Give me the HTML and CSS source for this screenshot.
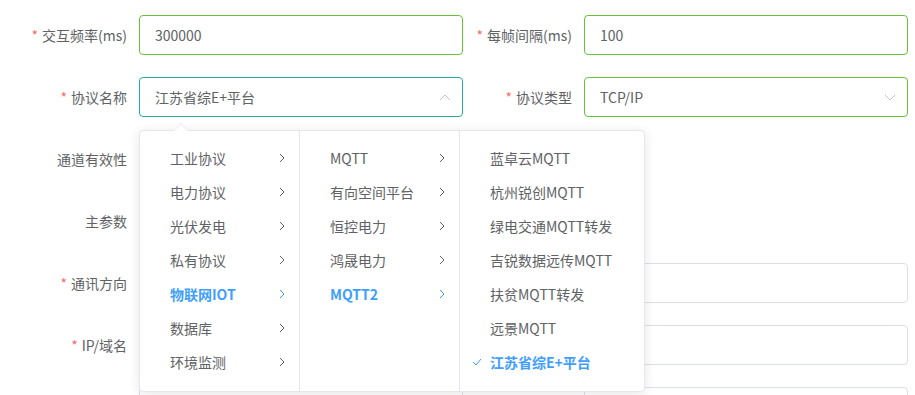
FILE: index.html
```html
<!DOCTYPE html>
<html lang="zh-CN">
<head>
  <meta charset="UTF-8">
  <meta name="viewport" content="width=device-width, initial-scale=1.0">
  <title>通道配置</title>
  <link rel="stylesheet" href="styles.css">
</head>
<body>
  <form class="form">
    <!-- row 1 -->
    <div class="form-item">
      <label class="label"><span class="req">*</span>交互频率(ms)</label>
      <div class="control"><div class="input is-success">300000</div></div>
    </div>
    <div class="form-item right">
      <label class="label"><span class="req">*</span>每帧间隔(ms)</label>
      <div class="control"><div class="input is-success">100</div></div>
    </div>

    <!-- row 2 -->
    <div class="form-item">
      <label class="label"><span class="req">*</span>协议名称</label>
      <div class="control select-wrap">
        <div class="input select is-focus">
          <span>江苏省综E+平台</span>
          <svg class="caret" width="12" height="7" viewBox="0 0 12 7"><path d="M1 6l5-5 5 5"/></svg>
        </div>

        <!-- cascader popup -->
        <div class="cascader">
          <span class="popper-arrow"></span>
          <ul class="menu">
            <li class="item">工业协议<svg class="chev" width="6" height="10" viewBox="0 0 6 10"><path d="M1 1l4 4-4 4"/></svg></li>
            <li class="item">电力协议<svg class="chev" width="6" height="10" viewBox="0 0 6 10"><path d="M1 1l4 4-4 4"/></svg></li>
            <li class="item">光伏发电<svg class="chev" width="6" height="10" viewBox="0 0 6 10"><path d="M1 1l4 4-4 4"/></svg></li>
            <li class="item">私有协议<svg class="chev" width="6" height="10" viewBox="0 0 6 10"><path d="M1 1l4 4-4 4"/></svg></li>
            <li class="item active">物联网IOT<svg class="chev" width="6" height="10" viewBox="0 0 6 10"><path d="M1 1l4 4-4 4"/></svg></li>
            <li class="item">数据库<svg class="chev" width="6" height="10" viewBox="0 0 6 10"><path d="M1 1l4 4-4 4"/></svg></li>
            <li class="item">环境监测<svg class="chev" width="6" height="10" viewBox="0 0 6 10"><path d="M1 1l4 4-4 4"/></svg></li>
          </ul>
          <ul class="menu">
            <li class="item">MQTT<svg class="chev" width="6" height="10" viewBox="0 0 6 10"><path d="M1 1l4 4-4 4"/></svg></li>
            <li class="item">有向空间平台<svg class="chev" width="6" height="10" viewBox="0 0 6 10"><path d="M1 1l4 4-4 4"/></svg></li>
            <li class="item">恒控电力<svg class="chev" width="6" height="10" viewBox="0 0 6 10"><path d="M1 1l4 4-4 4"/></svg></li>
            <li class="item">鸿晟电力<svg class="chev" width="6" height="10" viewBox="0 0 6 10"><path d="M1 1l4 4-4 4"/></svg></li>
            <li class="item active">MQTT2<svg class="chev" width="6" height="10" viewBox="0 0 6 10"><path d="M1 1l4 4-4 4"/></svg></li>
          </ul>
          <ul class="menu last">
            <li class="item">蓝卓云MQTT</li>
            <li class="item">杭州锐创MQTT</li>
            <li class="item">绿电交通MQTT转发</li>
            <li class="item">吉锐数据远传MQTT</li>
            <li class="item">扶贫MQTT转发</li>
            <li class="item">远景MQTT</li>
            <li class="item active"><svg class="check" width="10" height="8" viewBox="0 0 10 8"><path d="M1 4l3 3 5-6"/></svg>江苏省综E+平台</li>
          </ul>
        </div>
      </div>
    </div>
    <div class="form-item right">
      <label class="label"><span class="req">*</span>协议类型</label>
      <div class="control">
        <div class="input select is-success">
          <span>TCP/IP</span>
          <svg class="caret" width="12" height="7" viewBox="0 0 12 7"><path d="M1 1l5 5 5-5"/></svg>
        </div>
      </div>
    </div>

    <!-- row 3 -->
    <div class="form-item">
      <label class="label">通道有效性</label>
      <div class="control"></div>
    </div>
    <div class="form-item right"></div>

    <!-- row 4 -->
    <div class="form-item">
      <label class="label">主参数</label>
      <div class="control"></div>
    </div>
    <div class="form-item right"></div>

    <!-- row 5 -->
    <div class="form-item">
      <label class="label"><span class="req">*</span>通讯方向</label>
      <div class="control"><div class="input"></div></div>
    </div>
    <div class="form-item right">
      <label class="label"></label>
      <div class="control"><div class="input"></div></div>
    </div>

    <!-- row 6 -->
    <div class="form-item">
      <label class="label"><span class="req">*</span>IP/域名</label>
      <div class="control"><div class="input"></div></div>
    </div>
    <div class="form-item right">
      <label class="label"></label>
      <div class="control"><div class="input"></div></div>
    </div>

    <!-- row 7 -->
    <div class="form-item">
      <label class="label"></label>
      <div class="control"><div class="input"></div></div>
    </div>
    <div class="form-item right">
      <label class="label"></label>
      <div class="control"><div class="input"></div></div>
    </div>
  </form>
</body>
</html>
```

FILE: styles.css
```css
body {
  margin: 0;
  padding: 0;
  background-color: white;
  font-family: "Noto Sans CJK SC", "Noto Sans", sans-serif;
  font-size: 14px;
  color: #606266;
  overflow: hidden;
}
.form {
  display: grid;
  grid-template-columns: 463px 445px;
  grid-auto-rows: 40px;
  row-gap: 22px;
  padding-top: 15px;
}
.form-item {
  display: flex;
  align-items: center;
}
.label {
  width: 139px;
  height: 40px;
  box-sizing: border-box;
  padding-right: 12px;
  text-align: right;
  line-height: 40px;
  white-space: nowrap;
}
.form-item.right .label {
  width: 121px;
}
.req {
  color: #f56c6c;
  margin-right: 4px;
}
.control {
  width: 324px;
  height: 40px;
}
.input {
  box-sizing: border-box;
  height: 40px;
  border: 1px solid #dcdfe6;
  border-radius: 4px;
  padding: 0 15px;
  line-height: 38px;
  background: white;
}
.input.is-success {
  border-color: #67c23a;
}
.input.is-focus {
  border-color: #28ac98;
}
.select {
  display: flex;
  justify-content: space-between;
  align-items: center;
}
.caret {
  fill: none;
  stroke: #c0c4cc;
  stroke-width: 1;
  margin-right: -4px;
}

/* cascader dropdown */
.select-wrap {
  position: relative;
}
.cascader {
  position: absolute;
  top: 53px;
  left: 0;
  z-index: 10;
  display: flex;
  background: white;
  border: 1px solid #e4e7ed;
  border-radius: 4px;
  box-shadow: 0 2px 12px 0 rgba(0, 0, 0, 0.1);
}
.popper-arrow {
  position: absolute;
  top: -6px;
  left: 36px;
  width: 9px;
  height: 9px;
  background: white;
  border-left: 1px solid #ebeef5;
  border-top: 1px solid #ebeef5;
  transform: rotate(45deg);
}
.menu {
  list-style: none;
  margin: 0;
  padding: 10px 0 12px;
  width: 159px;
  height: 238px;
  border-right: 1px solid #e4e7ed;
}
.menu.last {
  width: 184px;
  border-right: none;
}
.item {
  position: relative;
  height: 34px;
  line-height: 34px;
  padding-left: 30px;
  white-space: nowrap;
}
.item.active {
  color: #409eff;
  font-weight: 700;
}
.chev {
  position: absolute;
  right: 14px;
  top: 12px;
  fill: none;
  stroke: currentColor;
  stroke-width: 1;
}
.check {
  position: absolute;
  left: 12px;
  top: 13px;
  fill: none;
  stroke: #409eff;
  stroke-width: 1;
}
```
